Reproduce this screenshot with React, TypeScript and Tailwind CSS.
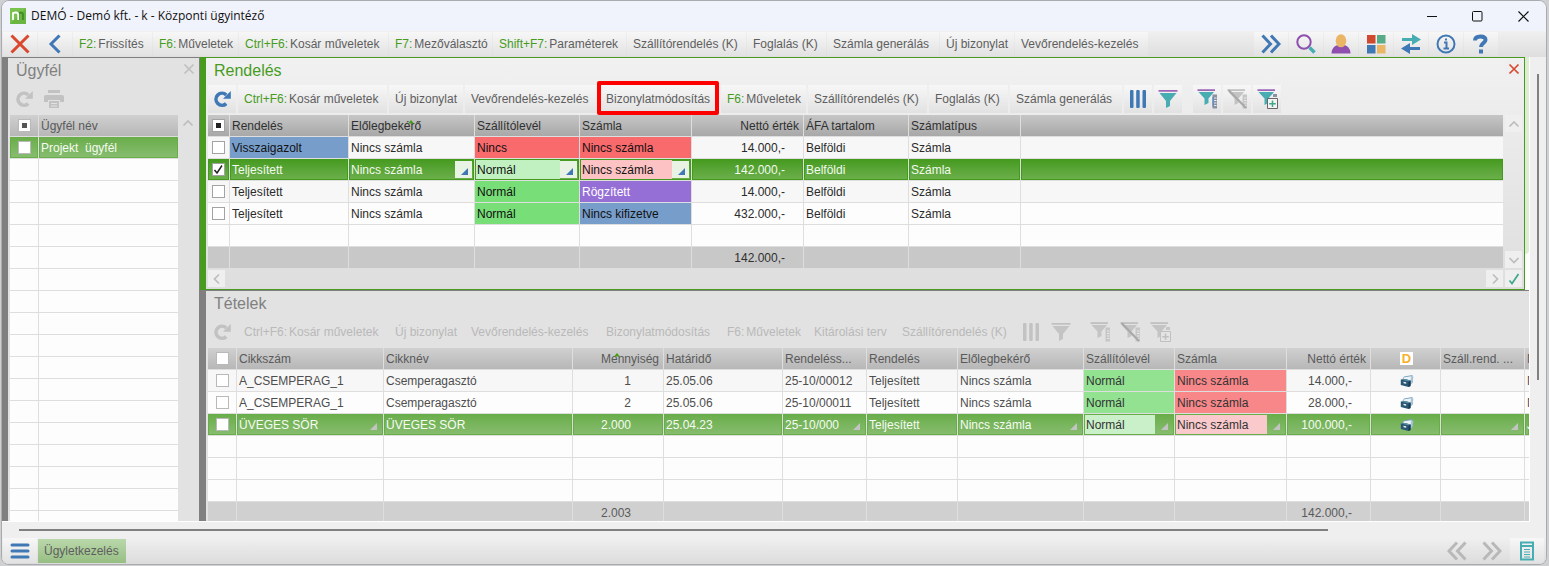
import React from 'react';

type Tone = 'plain' | 'blue' | 'red' | 'green' | 'purple';

/* ---------- icons ---------- */

const RefreshIcon = ({ color }: { color: string }) => (
  <svg width="18" height="18" viewBox="0 0 18 18" fill="none" aria-hidden="true">
    <path d="M13.200 13.600A6 6 0 1 1 13.200 5" stroke={color} strokeWidth="3.600" />
    <path d="M17.800 1v7.800H10z" fill={color} />
  </svg>
);

const PrinterIcon = () => (
  <svg width="20" height="20" viewBox="0 0 20 20" fill="#c2c2c2" aria-hidden="true">
    <path d="M4 1h12v3H4zM2 6h16a2 2 0 0 1 2 2v5h-4v-2H4v2H0V8a2 2 0 0 1 2-2z" />
    <path d="M5 12h10v7H5zM7 14v1h6v-1zM7 16.500v1h6v-1z" fillRule="evenodd" />
  </svg>
);

const Caret = ({ d, color = '#bdbdbd' }: { d: string; color?: string }) => (
  <svg width="12" height="12" viewBox="0 0 12 12" fill="none" stroke={color} strokeWidth="1.700" aria-hidden="true">
    <path d={d} />
  </svg>
);
const UP = 'M1.500 8.500 6 4l4.500 4.500';
const DOWN = 'M1.500 4 6 8.500 10.500 4';
const LEFT = 'M8 1.500 3.500 6 8 10.500';
const RIGHT = 'M4 1.500 8.500 6 4 10.500';
const CROSS = 'M1.500 1.500l9 9M10.500 1.500l-9 9';

const DoubleChevron = ({ color, flip = false }: { color: string; flip?: boolean }) => (
  <svg width="20" height="20" viewBox="0 0 20 20" fill="none" stroke={color} strokeWidth="3" aria-hidden="true">
    <path d={flip ? 'M10 1.500 2 10l8 8.500M18.500 1.500l-8 8.500 8 8.500' : 'M1.500 1.500l8 8.500-8 8.500M10 1.500l8 8.500-8 8.500'} />
  </svg>
);

const BarsIcon = ({ color }: { color: string }) => (
  <svg width="18" height="20" viewBox="0 0 18 20" fill={color} aria-hidden="true">
    <rect x="1" y="1" width="3.500" height="18" rx="1" />
    <rect x="7.200" y="1" width="3.500" height="18" rx="1" />
    <rect x="13.500" y="1" width="3.500" height="18" rx="1" />
  </svg>
);

type FunnelKind = 'plain' | 'list' | 'off' | 'add';
const FunnelIcon = ({ kind, active }: { kind: FunnelKind; active: boolean }) => {
  const body = active ? '#48adb3' : '#c4c4c4';
  const rim = active ? '#9b66b5' : '#c0c0c0';
  const side = active ? '#8a929e' : '#c6c6c6';
  if (kind === 'plain') {
    return (
      <svg width="20" height="20" viewBox="0 0 20 20" aria-hidden="true">
        <path d="M1.500 4h17L12 12v5l-4 2v-7z" fill={body} />
        <path d="M.5 1h19v1.700H.5z" fill={rim} />
      </svg>
    );
  }
  return (
    <svg width="22" height="22" viewBox="0 0 22 22" aria-hidden="true">
      <path d="M2.500 4h15.500L12.500 10.500v4.500l-4 2v-6.500z" fill={body} />
      <path d="M1.500 1.200h17.500v1.800H1.500z" fill={rim} />
      {kind !== 'add' && (
        <g>
          <path d="M16.500 6.500h4.500v14h-4.500z" fill={side} />
          <path d="M18 10h2.500M18 12.500h2.500M18 15h2.500M18 17.500h2.500" stroke={active ? '#dfe9fa' : '#e8e8e8'} />
          {active && <path d="M17 9v9.500" stroke="#4f82c4" />}
        </g>
      )}
      {kind === 'off' && <path d="M2.500 2 20 20" stroke="#a9a9a9" strokeWidth="2.200" />}
      {kind === 'add' && (
        <g>
          <path d="M17 6h4v3h-4z" fill={side} />
          <path d="M11.500 10.500h10v10h-10z" fill={active ? '#f4f4f4' : '#e4e4e4'} stroke={active ? '#666' : '#c0c0c0'} />
          <path d="M16.500 12.500v6.500M13.200 15.700h6.600" stroke={active ? '#3fa88a' : '#c0c0c0'} strokeWidth="1.500" />
        </g>
      )}
    </svg>
  );
};

const BinderIcon = () => (
  <svg width="14" height="14" viewBox="0 0 14 14" className="mx-auto block" aria-hidden="true">
    <path d="M2.500 4.500 4 2.500 12.500 1v1.500L13 8l-3 3z" fill="#7fa6c2" />
    <path d="M3.500 3.500 11.500 2.200V7L4 6z" fill="#eef5f9" />
    <path d="M10.800 3.500l2.700-1-1.200 6.500-1.800 1.500z" fill="#a8c4d6" />
    <path d="M.8 5.500 5 5l5.500 1.500v5.500l-2 1L.8 11z" fill="#2a5573" />
    <path d="M.8 5.500 5 5l5.500 1.500-1.500 1z" fill="#5d8fa5" />
    <path d="M8.500 7.700 10.500 6.500v5.500l-2 1z" fill="#173a54" />
    <path d="M3.500 7.700l2.700.5v1.500l-2.700-.5z" fill="#e7f1f5" />
  </svg>
);

const SortMark = () => (
  <svg width="6" height="4" viewBox="0 0 6 4" className="absolute top-[5px] left-1/2 -ml-1" aria-label="Rendezve">
    <path d="M3 0l3 3.500H0z" fill="#479c1d" />
  </svg>
);

/* ---------- controls ---------- */

const Check = ({ label, state = 'off', dim = false }: { label: string; state?: 'off' | 'on' | 'mixed'; dim?: boolean }) => (
  <span className="relative mx-auto block size-[13px]">
    <input
      type="checkbox"
      aria-label={label}
      defaultChecked={state === 'on'}
      className={`block size-[13px] appearance-none border bg-white ${dim ? 'border-[#b9b9b9]' : 'border-[#a3a3a3]'}`}
    />
    {state === 'on' && (
      <svg width="13" height="13" viewBox="0 0 13 13" className="pointer-events-none absolute inset-0" fill="none" stroke="#222" strokeWidth="1.500">
        <path d="M2.500 7l2.500 3 5-7.500" />
      </svg>
    )}
    {state === 'mixed' && <span className={`pointer-events-none absolute inset-1 ${dim ? 'bg-[#555]' : 'bg-[#222]'}`} />}
  </span>
);

type Action = { hot?: string; text: string; width: string; marked?: boolean };

const A = {
  refresh: { hot: 'F2:', text: 'Frissítés', width: 'w-[79px]' },
  ops: { hot: 'F6:', text: 'Műveletek', width: 'w-[85px]' },
  cart: { hot: 'Ctrl+F6:', text: 'Kosár műveletek', width: 'w-[149px]' },
  fields: { hot: 'F7:', text: 'Mezőválasztó', width: 'w-[103px]' },
  params: { hot: 'Shift+F7:', text: 'Paraméterek', width: 'w-[133px]' },
  supplier: { text: 'Szállítórendelés (K)', width: 'w-[119px]' },
  reserve: { text: 'Foglalás (K)', width: 'w-[79px]' },
  invoice: { text: 'Számla generálás', width: 'w-[112px]' },
  create: { text: 'Új bizonylat', width: 'w-[74px]' },
  customer: { text: 'Vevőrendelés-kezelés', width: 'w-[133px]' },
  modify: { text: 'Bizonylatmódosítás', width: 'w-[119px]' },
  plan: { text: 'Kitárolási terv', width: 'w-[86px]' },
} satisfies Record<string, Action>;

const ActionButton = ({ action, disabled = false }: { action: Action; disabled?: boolean }) => (
  <button
    type="button"
    disabled={disabled}
    className={`relative h-full shrink-0 pl-[6px] text-left whitespace-nowrap ${action.width} ${
      disabled ? 'text-[#b9b9b9]' : 'bg-linear-to-b from-[#f7f7f7] to-[#e2e2e2] text-[#5e5e5e]'
    }`}
  >
    {action.hot && <span className={disabled ? 'mr-[2px]' : 'mr-[2px] text-[#479c1d]'}>{action.hot}</span>}
    {action.text}
    {action.marked && <span className="absolute -top-1 right-0 -bottom-[2px] -left-[3px] z-10 rounded-xs border-4 border-[#fe0000]" />}
  </button>
);

const IconButton = ({ label, size, disabled = false, flat = false, children }: {
  label: string; size: string; disabled?: boolean; flat?: boolean; children: React.ReactNode;
}) => (
  <button
    type="button"
    aria-label={label}
    disabled={disabled}
    className={`flex shrink-0 items-center justify-center ${size} ${flat ? '' : 'bg-linear-to-b from-[#f7f7f7] to-[#e2e2e2]'}`}
  >
    {children}
  </button>
);

const PanelToolbar = ({ actions, active }: { actions: Action[]; active: boolean }) => {
  const sq = 'size-7';
  return (
    <div className="flex h-7 gap-[2px]">
      <IconButton label="Frissítés" size={sq} flat={!active} disabled={!active}>
        <RefreshIcon color={active ? '#3f78b5' : '#c2c2c2'} />
      </IconButton>
      {actions.map((a) => <ActionButton key={a.text} action={a} disabled={!active} />)}
      <IconButton label="Oszlopok" size={sq} flat={!active} disabled={!active}><BarsIcon color={active ? '#3f78b5' : '#c2c2c2'} /></IconButton>
      <IconButton label="Szűrő" size={sq} flat={!active} disabled={!active}><FunnelIcon kind="plain" active={active} /></IconButton>
      <span className="w-[7px]" />
      <IconButton label="Szűrőlista" size={sq} flat={!active} disabled={!active}><FunnelIcon kind="list" active={active} /></IconButton>
      <IconButton label="Szűrő törlése" size={sq} disabled flat={!active}><FunnelIcon kind="off" active={false} /></IconButton>
      <IconButton label="Szűrő hozzáadása" size={sq} flat={!active} disabled={!active}><FunnelIcon kind="add" active={active} /></IconButton>
    </div>
  );
};

/* ---------- tables ---------- */

type Col = { title: React.ReactNode; width: string; right?: string; sorted?: boolean; pick?: boolean };

const CELL = 'h-[22px] overflow-hidden whitespace-nowrap border-b border-r border-[#dedede] p-0 font-normal';
const HEAD_ON = 'bg-linear-to-b from-[#c6c6c6] to-[#a8a8a8] text-[#303030]';
const HEAD_OFF = 'bg-linear-to-b from-[#d0d0d0] to-[#b7b7b7] text-[#5a5a5a]';
const SEL_ON = 'bg-linear-to-b from-[#449a1c] to-[#6db04c] text-[#f3faef] shadow-[inset_0_0_0_1px_#449a1c]';
const SEL_OFF = 'bg-linear-to-b from-[#69ad49] to-[#88bd70] text-[#f6fbf3] shadow-[inset_0_0_0_1px_#69ad49]';

const TONE_ON: Record<Tone, string> = {
  plain: 'text-[#2a2a2a]', blue: 'bg-[#779dca] text-[#111]', red: 'bg-[#f96a6d] text-[#111]',
  green: 'bg-[#78de78] text-[#111]', purple: 'bg-[#966fd6] text-white',
};
const TONE_OFF: Record<Tone, string> = {
  plain: 'text-[#4d4d4d]', blue: 'bg-[#92b1d5] text-[#333]', red: 'bg-[#f88789] text-[#333]',
  green: 'bg-[#92e292] text-[#333]', purple: 'bg-[#ab8cde] text-white',
};
const SOFT_ON: Record<string, string> = { green: 'bg-[#c1f1c1] text-[#111]', red: 'bg-[#fdc2c4] text-[#111]' };
const SOFT_OFF: Record<string, string> = { green: 'bg-[#caf0ca] text-[#333]', red: 'bg-[#f9c9cb] text-[#333]' };

const PickCell = ({ text, tone, active }: { text: React.ReactNode; tone: Tone; active: boolean }) => (
  <div className="flex h-[21px] items-center py-px pr-[2px] pl-px">
    <span className={`h-full min-w-0 flex-1 overflow-hidden pt-[2px] pl-px ${(active ? SOFT_ON : SOFT_OFF)[tone] ?? ''}`}>{text}</span>
    <button type="button" aria-label="Választás" className={`relative size-[17px] shrink-0 ${active ? 'bg-[#e8f3e3]' : ''}`}>
      <svg width="7" height="7" viewBox="0 0 7 7" className="absolute right-1 bottom-[3px]" aria-hidden="true">
        <path d="M7 0v7H0z" fill={active ? '#3f78b5' : '#c3c3c3'} />
      </svg>
    </button>
  </div>
);

type Row = { cells: React.ReactNode[]; tones?: Record<number, Tone>; selected?: boolean; check?: boolean };

const Grid = ({ label, cols, rows, blanks, footer, checkWidth, headState = 'off', active }: {
  label: string; cols: Col[]; rows: Row[]; blanks: number; footer?: Record<number, string>;
  checkWidth: string; headState?: 'off' | 'mixed'; active: boolean;
}) => {
  const head = active ? HEAD_ON : HEAD_OFF;
  const sel = active ? SEL_ON : SEL_OFF;
  const foot = active ? 'bg-[#c8c8c8] text-[#303030]' : 'bg-[#d0d0d0] text-[#5a5a5a]';
  return (
    <table aria-label={label} className="w-full table-fixed border-separate border-spacing-0 bg-[#fdfdfd] text-left">
      <colgroup>
        <col className={checkWidth} />
        {cols.map((c, i) => <col key={i} className={c.width} />)}
      </colgroup>
      <thead>
        <tr>
          <th className={`${CELL} ${head}`}><Check label={`${label}: mind`} state={headState} dim={!active} /></th>
          {cols.map((c, i) => (
            <th key={i} className={`${CELL} ${head} relative pl-[2px] last:border-r-0 ${c.right ? 'pr-1 text-right' : ''}`}>
              {c.title}
              {c.sorted && <SortMark />}
            </th>
          ))}
        </tr>
      </thead>
      <tbody>
        {rows.map((r, n) => (
          <tr key={n} className={n % 2 === 0 ? 'bg-[#f7f7f7]' : 'bg-[#fdfdfd]'}>
            <td className={`${CELL} ${r.selected ? sel : ''}`}>
              <Check label={`${label}: ${n + 1}. sor`} state={r.check ? 'on' : 'off'} dim={!active} />
            </td>
            {cols.map((c, i) => {
              const tone = r.tones?.[i] ?? 'plain';
              if (r.selected && c.pick) {
                return <td key={i} className={`${CELL} ${sel}`}><PickCell text={r.cells[i]} tone={tone} active={active} /></td>;
              }
              return (
                <td
                  key={i}
                  className={`${CELL} pl-[2px] last:border-r-0 ${r.selected ? sel : (active ? TONE_ON : TONE_OFF)[tone]} ${c.right ? `text-right ${c.right}` : ''}`}
                >
                  {r.cells[i]}
                </td>
              );
            })}
          </tr>
        ))}
        {Array.from({ length: blanks }, (_, n) => (
          <tr key={`b${n}`}>
            <td className={CELL} />
            {cols.map((_c, i) => <td key={i} className={`${CELL} last:border-r-0`} />)}
          </tr>
        ))}
      </tbody>
      {footer && (
        <tfoot>
          <tr>
            <td className={`${CELL} ${foot}`} />
            {cols.map((c, i) => (
              <td key={i} className={`${CELL} ${foot} last:border-r-0 ${c.right ? `text-right ${c.right}` : ''}`}>{footer[i]}</td>
            ))}
          </tr>
        </tfoot>
      )}
    </table>
  );
};

/* ---------- data ---------- */

const orderCols: Col[] = [
  { title: 'Rendelés', width: 'w-[119px]' },
  { title: 'Előlegbekérő', width: 'w-[126px]', sorted: true, pick: true },
  { title: 'Szállítólevél', width: 'w-[105px]', pick: true },
  { title: 'Számla', width: 'w-[112px]', pick: true },
  { title: 'Nettó érték', width: 'w-[112px]', right: 'pr-[18px]' },
  { title: 'ÁFA tartalom', width: 'w-[105px]' },
  { title: 'Számlatípus', width: 'w-[112px]' },
  { title: '', width: 'w-auto' },
];
const orderRows: Row[] = [
  { cells: ['Visszaigazolt', 'Nincs számla', 'Nincs', 'Nincs számla', '14.000,-', 'Belföldi', 'Számla'], tones: { 0: 'blue', 2: 'red', 3: 'red' } },
  { cells: ['Teljesített', 'Nincs számla', 'Normál', 'Nincs számla', '142.000,-', 'Belföldi', 'Számla'], tones: { 2: 'green', 3: 'red' }, selected: true, check: true },
  { cells: ['Teljesített', 'Nincs számla', 'Normál', 'Rögzített', '14.000,-', 'Belföldi', 'Számla'], tones: { 2: 'green', 3: 'purple' } },
  { cells: ['Teljesített', 'Nincs számla', 'Normál', 'Nincs kifizetve', '432.000,-', 'Belföldi', 'Számla'], tones: { 2: 'green', 3: 'blue' } },
];

const itemCols: Col[] = [
  { title: 'Cikkszám', width: 'w-[147px]', pick: true },
  { title: 'Cikknév', width: 'w-[189px]' },
  { title: 'Mennyiség', width: 'w-[91px]', right: 'pr-8', sorted: true },
  { title: 'Határidő', width: 'w-[119px]' },
  { title: 'Rendeléss...', width: 'w-[84px]', pick: true },
  { title: 'Rendelés', width: 'w-[91px]' },
  { title: 'Előlegbekérő', width: 'w-[126px]', pick: true },
  { title: 'Szállítólevél', width: 'w-[91px]', pick: true },
  { title: 'Számla', width: 'w-[112px]', pick: true },
  { title: 'Nettó érték', width: 'w-[84px]', right: 'pr-[18px]' },
  { title: <span className="mx-auto block size-[13px] bg-white text-center text-[13px] leading-[13px] font-bold text-[#f8b02c]">D</span>, width: 'w-[70px]' },
  { title: 'Száll.rend. ...', width: 'w-[84px]', pick: true },
  { title: 'M', width: 'w-auto' },
];
const itemTones: Record<number, Tone> = { 7: 'green', 8: 'red' };
const itemRows: Row[] = [
  { cells: ['A_CSEMPERAG_1', 'Csemperagasztó', '1', '25.05.06', '25-10/00012', 'Teljesített', 'Nincs számla', 'Normál', 'Nincs számla', '14.000,-', <BinderIcon />, '', 'N'], tones: itemTones },
  { cells: ['A_CSEMPERAG_1', 'Csemperagasztó', '2', '25.05.06', '25-10/00011', 'Teljesített', 'Nincs számla', 'Normál', 'Nincs számla', '28.000,-', <BinderIcon />, '', 'N'], tones: itemTones },
  { cells: ['ÜVEGES SÖR', 'ÜVEGES SÖR', '2.000', '25.04.23', '25-10/000', 'Teljesített', 'Nincs számla', 'Normál', 'Nincs számla', '100.000,-', <BinderIcon />, '', 'J'], tones: itemTones, selected: true },
];

/* ---------- page ---------- */

const TOP_ACTIONS: Action[] = [A.refresh, A.ops, A.cart, A.fields, A.params, A.supplier, A.reserve, A.invoice, A.create, A.customer];
const ORDER_ACTIONS: Action[] = [A.cart, A.create, A.customer, { ...A.modify, marked: true }, A.ops, A.supplier, A.reserve, A.invoice];
const ITEM_ACTIONS: Action[] = [A.cart, A.create, A.customer, A.modify, A.ops, A.plan, A.supplier];

const TitleBar = () => (
  <header className="flex h-[30px] shrink-0 items-center bg-[#f0f3fb] pl-2 font-['Open_Sans','Noto_Sans',sans-serif] text-[#111]">
    <svg width="16" height="16" viewBox="0 0 16 16" aria-hidden="true">
      <rect width="16" height="16" fill="#7ac24f" />
      <path d="M0 16 16 0v16z" fill="#6bb643" />
      <path d="M8.700 12V6.500q0-2 2-2t2.300 2V12" fill="none" stroke="#3d8f22" strokeWidth="1.800" />
      <path d="M3 12V4.300M3 6.500q0-2 2.600-2 2.600 0 2.600 2V12" fill="none" stroke="#fff" strokeWidth="1.800" />
    </svg>
    <h1 className="ml-[5px] text-[12px]">DEMÓ - Demó kft. - k - Központi ügyintéző</h1>
    <div className="ml-auto flex h-full">
      <IconButton label="Kis méret" size="w-[46px]" flat><svg width="10" height="10" stroke="#111"><path d="M0 5.500h10" /></svg></IconButton>
      <IconButton label="Teljes méret" size="w-[45px]" flat><svg width="11" height="11" fill="none" stroke="#111"><rect x=".5" y=".5" width="9.500" height="9.500" rx="1" /></svg></IconButton>
      <IconButton label="Bezárás" size="w-[46px]" flat><svg width="11" height="11" stroke="#111" strokeWidth="1.200"><path d="M.5.5l10 10M10.500.5l-10 10" /></svg></IconButton>
    </div>
  </header>
);

const MainToolbar = () => {
  const w = 'w-[34px]';
  return (
    <nav className="flex h-[26px] shrink-0 gap-px bg-linear-to-b from-[#f0f0f0] to-[#dedede] pt-px pb-px pl-px">
      <IconButton label="Mégse" size={w}>
        <svg width="20" height="20" fill="none" stroke="#d8492f" strokeWidth="3" aria-hidden="true"><path d="M1.500 1.500l17 17M18.500 1.500l-17 17" /></svg>
      </IconButton>
      <IconButton label="Vissza" size={w}>
        <svg width="20" height="20" fill="none" stroke="#3f78b5" strokeWidth="3" aria-hidden="true"><path d="M14.500 1.500 6 10l8.500 8.500" /></svg>
      </IconButton>
      {TOP_ACTIONS.map((a) => <ActionButton key={a.text} action={a} />)}
      <div className="mr-12 ml-auto flex gap-px">
        <IconButton label="Tovább" size={w}><DoubleChevron color="#3f78b5" /></IconButton>
        <IconButton label="Keresés" size={w}>
          <svg width="20" height="20" fill="none" aria-hidden="true">
            <circle cx="8" cy="8" r="6.700" stroke="#8e4fae" strokeWidth="2" />
            <path d="M13.500 13.500l5 5" stroke="#48adb3" strokeWidth="3.600" />
          </svg>
        </IconButton>
        <IconButton label="Felhasználó" size={w}>
          <svg width="20" height="20" aria-hidden="true">
            <path d="M.5 19.500c0-5 3-7.500 6-8.500h7c3 1 6 3.500 6 8.500z" fill="#8e4fae" />
            <ellipse cx="10" cy="6.800" rx="5.300" ry="6.500" fill="#eab564" />
          </svg>
        </IconButton>
        <IconButton label="Modulok" size={w}>
          <svg width="20" height="20" aria-hidden="true">
            <rect x="1" y="1" width="8.500" height="8.500" fill="#d0492f" /><rect x="11" y="1" width="8.500" height="8.500" fill="#57ab87" />
            <rect x="1" y="11" width="8.500" height="8.500" fill="#3f78b5" /><rect x="11" y="11" width="8.500" height="8.500" fill="#eab564" />
          </svg>
        </IconButton>
        <IconButton label="Csere" size={w}>
          <svg width="22" height="20" aria-hidden="true">
            <path d="M2 4h10V0l9 5.500-9 5.500V7H2z" fill="#48adb3" />
            <path d="M20 13H10V9l-9 5.500L10 20v-4h10z" fill="#3f78b5" />
          </svg>
        </IconButton>
        <IconButton label="Információ" size={w}>
          <svg width="20" height="20" fill="none" stroke="#3f78b5" strokeWidth="2" aria-hidden="true">
            <circle cx="10" cy="10" r="8.500" />
            <path d="M8 8.500h2.500V14M7.500 14.500h5.500M9 5.500h2" />
          </svg>
        </IconButton>
        <IconButton label="Súgó" size={w}>
          <svg width="16" height="20" fill="none" stroke="#3f78b5" strokeWidth="4" aria-hidden="true">
            <path d="M2 6.500C2 3.500 4.500 2.500 7.500 2.500s5 1 5 3.500c0 3-4.500 3.200-4.500 7M8 15.500v4" />
          </svg>
        </IconButton>
      </div>
    </nav>
  );
};

const ScrollKey = ({ label, d, color }: { label: string; d: string; color?: string }) => (
  <button type="button" aria-label={label} className="flex size-[17px] items-center justify-center bg-[#efefef]">
    <Caret d={d} color={color} />
  </button>
);

const CustomerPanel = () => (
  <section className="flex w-[191px] shrink-0 flex-col border-t border-[#808080] bg-[#e2e2e2] pl-[2px]">
    <div className="flex h-[27px] items-start justify-between pt-1 pr-1">
      <h2 className="pl-[6px] text-[16px] leading-[18px] text-[#808080]">Ügyfél</h2>
      <button type="button" aria-label="Panel bezárása" className="pt-px"><Caret d={CROSS} color="#c0c0c0" /></button>
    </div>
    <div className="mb-[2px] flex h-7 gap-[2px]">
      <IconButton label="Frissítés" size="size-7" flat disabled><RefreshIcon color="#c2c2c2" /></IconButton>
      <IconButton label="Nyomtatás" size="size-7" flat disabled><PrinterIcon /></IconButton>
    </div>
    <div className="flex min-h-0 flex-1 overflow-hidden">
      <div className="min-w-0 flex-1">
        <Grid
          label="Ügyfelek"
          cols={[{ title: 'Ügyfél név', width: 'w-auto' }]}
          rows={[{ cells: [<span className="whitespace-pre">{'Projekt  ügyfél'}</span>], selected: true }]}
          blanks={17}
          checkWidth="w-[29px]"
          headState="mixed"
          active={false}
        />
      </div>
      <div className="w-[21px] pt-[2px] pl-1"><Caret d={UP} /></div>
    </div>
  </section>
);

const OrderPanel = () => (
  <div className="flex bg-[#fdfdfd]">
    <section className="flex min-w-0 flex-1 border border-l-[6px] border-[#479c1d] bg-linear-to-b from-[#f1f1f1] to-[#dedede] pb-[2px] pl-[2px]">
      <div className="min-w-0 flex-1">
        <h2 className="h-[27px] pl-[6px] text-[16px] leading-[26px] text-[#479c1d]">Rendelés</h2>
        <PanelToolbar actions={ORDER_ACTIONS} active />
        <div className="mt-[2px]">
          <Grid label="Rendelés" cols={orderCols} rows={orderRows} blanks={1} footer={{ 4: '142.000,-' }} checkWidth="w-[22px]" headState="mixed" active />
        </div>
        <div className="mt-px flex justify-between">
          <ScrollKey label="Balra" d={LEFT} />
          <ScrollKey label="Jobbra" d={RIGHT} />
        </div>
      </div>
      <div className="flex w-[21px] shrink-0 flex-col pt-[2px] pl-[2px]">
        <ScrollKey label="Panel bezárása" d={CROSS} color="#d8492f" />
        <div className="mt-[38px]"><ScrollKey label="Fel" d={UP} /></div>
        <div className="mt-auto mb-[2px]"><ScrollKey label="Le" d={DOWN} /></div>
        <ScrollKey label="Rendben" d="M1.500 7.500 4 10.500 10.500 1" color="#3fa88a" />
      </div>
    </section>
    <div className="w-1 shrink-0 pb-9"><div className="h-full rounded-br-sm bg-[#deebd5]" /></div>
  </div>
);

const ItemPanel = () => (
  <section className="flex min-h-0 flex-1 flex-col overflow-hidden border-t border-[#808080] bg-[#e2e2e2] pl-[2px] [border-left:6px_solid_#808080]">
    <h2 className="h-[27px] shrink-0 pl-[6px] text-[16px] leading-[25px] text-[#808080]">Tételek</h2>
    <PanelToolbar actions={ITEM_ACTIONS} active={false} />
    <div className="mt-[2px] min-h-0 flex-1 overflow-hidden">
      <Grid label="Tételek" cols={itemCols} rows={itemRows} blanks={3} footer={{ 2: '2.003', 9: '142.000,-' }} checkWidth="w-[29px]" active={false} />
    </div>
  </section>
);

const StatusBar = () => (
  <footer className="flex h-[26px] shrink-0 items-center bg-linear-to-b from-[#efefef] to-[#dcdcdc] pr-[2px] pb-px pl-px">
    <IconButton label="Menü" size="h-[25px] w-[34px]">
      <svg width="20" height="16" stroke="#3f78b5" strokeWidth="3" strokeLinecap="round" aria-hidden="true"><path d="M2 2h16M2 8h16M2 14h16" /></svg>
    </IconButton>
    <button type="button" className="ml-px h-6 w-[88px] bg-linear-to-b from-[#bad8ab] to-[#97be83] pl-[6px] text-left text-[#5e5e5e]">Ügyletkezelés</button>
    <div className="ml-auto flex h-full items-center gap-px">
      <IconButton label="Előző" size="w-[34px]" flat disabled><DoubleChevron color="#b8b8b8" flip /></IconButton>
      <IconButton label="Következő" size="w-[34px]" flat disabled><DoubleChevron color="#b8b8b8" /></IconButton>
      <IconButton label="Lista" size="h-[25px] w-[34px]">
        <svg width="16" height="20" fill="none" stroke="#48adb3" strokeWidth="2" aria-hidden="true">
          <path d="M2 1.500h12v17H2zM2 5h12" />
          <path d="M5 8.500h6M5 11h6M5 13.500h6M5 16h6" strokeWidth="1.200" />
        </svg>
      </IconButton>
    </div>
  </footer>
);

export default function App() {
  return (
    <div className="flex h-screen bg-[#cfd0d2] pr-[2px] pb-px pl-px font-['Liberation_Sans',Arial,sans-serif] text-[12px] leading-4">
      <div className="flex min-w-0 flex-1 flex-col overflow-hidden rounded-lg border border-[#a9abaf] bg-[#efefef]">
        <TitleBar />
        <MainToolbar />
        <main className="flex min-h-0 flex-1">
          <div className="flex min-w-0 flex-1 border-r border-b border-white">
            <div className="w-[6px] shrink-0 bg-[#808080]" />
            <CustomerPanel />
            <div className="w-px shrink-0 bg-[#808080]" />
            <div className="flex min-w-0 flex-1 flex-col">
              <OrderPanel />
              <ItemPanel />
            </div>
          </div>
          <div className="flex w-4 shrink-0 justify-center pt-[17px]"><div className="h-[306px] w-[2px] bg-[#808080]" /></div>
        </main>
        <div className="h-4 shrink-0 pt-[7px] pl-[17px]"><div className="h-[2px] w-6/7 bg-[#808080]" /></div>
        <StatusBar />
      </div>
    </div>
  );
}
